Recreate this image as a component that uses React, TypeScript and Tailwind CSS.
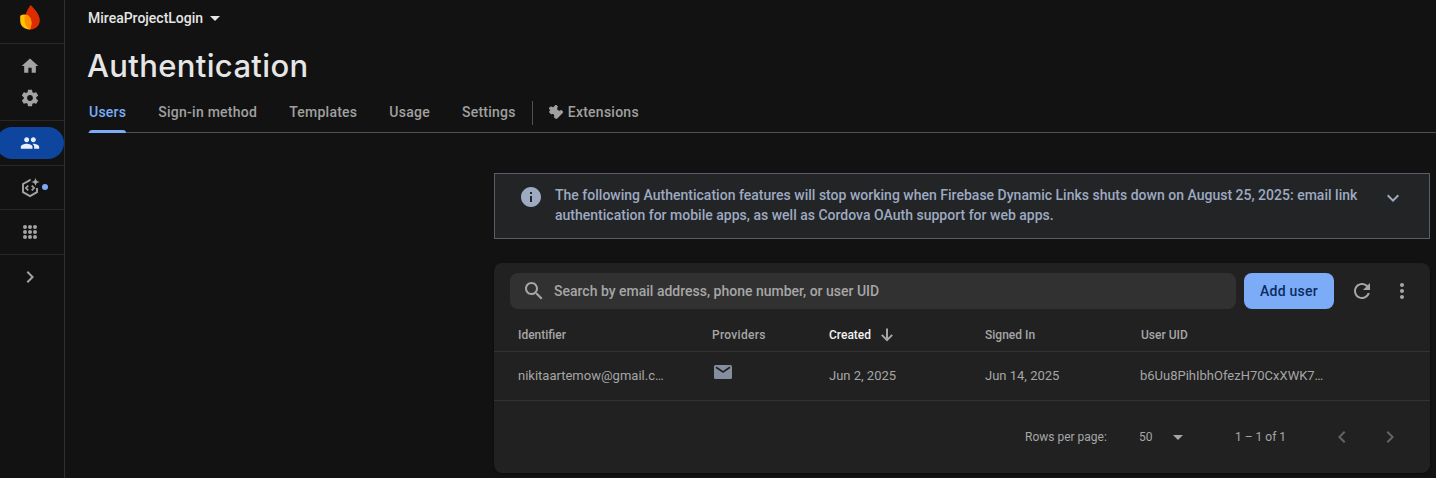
import type { ReactNode } from 'react';

type IconProps = { d: string; size?: number; className?: string };

function Icon({ d, size = 20, className = '' }: IconProps) {
  return (
    <svg width={size} height={size} viewBox="0 0 24 24" fill="currentColor" className={`shrink-0 ${className}`} aria-hidden="true">
      <path d={d} />
    </svg>
  );
}

const paths = {
  home: 'M10 20v-6h4v6h5v-8h3L12 3 2 12h3v8z',
  settings:
    'M19.43 12.98c.04-.32.07-.64.07-.98s-.03-.66-.07-.98l2.11-1.65c.19-.15.24-.42.12-.64l-2-3.46c-.12-.22-.39-.3-.61-.22l-2.49 1c-.52-.4-1.08-.73-1.69-.98l-.38-2.65C14.46 2.18 14.25 2 14 2h-4c-.25 0-.46.18-.49.42l-.38 2.65c-.61.25-1.17.59-1.69.98l-2.49-1c-.23-.09-.49 0-.61.22l-2 3.46c-.13.22-.07.49.12.64l2.11 1.65c-.04.32-.07.65-.07.98s.03.66.07.98l-2.11 1.65c-.19.15-.24.42-.12.64l2 3.46c.12.22.39.3.61.22l2.49-1c.52.4 1.08.73 1.69.98l.38 2.65c.03.24.24.42.49.42h4c.25 0 .46-.18.49-.42l.38-2.65c.61-.25 1.17-.59 1.69-.98l2.49 1c.23.09.49 0 .61-.22l2-3.46c.12-.22.07-.49-.12-.64l-2.11-1.65zM12 15.5c-1.93 0-3.5-1.57-3.5-3.5s1.57-3.5 3.5-3.5 3.5 1.57 3.5 3.5-1.57 3.5-3.5 3.5z',
  people:
    'M16 11c1.66 0 2.99-1.34 2.99-3S17.66 5 16 5c-1.66 0-3 1.34-3 3s1.34 3 3 3zm-8 0c1.66 0 2.99-1.34 2.99-3S9.66 5 8 5C6.34 5 5 6.34 5 8s1.34 3 3 3zm0 2c-2.33 0-7 1.17-7 3.5V19h14v-2.5c0-2.33-4.67-3.5-7-3.5zm8 0c-.29 0-.62.02-.97.05 1.16.84 1.97 1.97 1.97 3.45V19h6v-2.5c0-2.33-4.67-3.5-7-3.5z',
  right: 'M10 6 8.59 7.41 13.17 12l-4.58 4.59L10 18l6-6z',
  left: 'M15.41 7.41 14 6l-6 6 6 6 1.41-1.41L10.83 12z',
  down: 'M16.59 8.59 12 13.17 7.41 8.59 6 10l6 6 6-6z',
  dropDown: 'M7 10l5 5 5-5z',
  info: 'M12 2C6.48 2 2 6.48 2 12s4.48 10 10 10 10-4.48 10-10S17.52 2 12 2zm1 15h-2v-6h2v6zm0-8h-2V7h2v2z',
  search:
    'M15.5 14h-.79l-.28-.27C15.41 12.59 16 11.11 16 9.5 16 5.91 13.09 3 9.5 3S3 5.91 3 9.5 5.91 16 9.5 16c1.61 0 3.09-.59 4.23-1.57l.27.28v.79l5 4.99L20.49 19l-4.99-5zm-6 0C7.01 14 5 11.99 5 9.5S7.01 5 9.5 5 14 7.01 14 9.5 11.99 14 9.5 14z',
  refresh:
    'M17.65 6.35C16.2 4.9 14.21 4 12 4c-4.42 0-7.99 3.58-7.99 8s3.57 8 7.99 8c3.73 0 6.84-2.55 7.73-6h-2.08c-.82 2.33-3.04 4-5.65 4-3.31 0-6-2.69-6-6s2.69-6 6-6c1.66 0 3.14.69 4.22 1.78L13 11h7V4l-2.35 2.35z',
  more: 'M12 8c1.1 0 2-.9 2-2s-.9-2-2-2-2 .9-2 2 .9 2 2 2zm0 2c-1.1 0-2 .9-2 2s.9 2 2 2 2-.9 2-2-.9-2-2-2zm0 6c-1.1 0-2 .9-2 2s.9 2 2 2 2-.9 2-2-.9-2-2-2z',
};

function FirebaseLogo() {
  return (
    <svg width="20" height="25" viewBox="0 0 20 25" aria-hidden="true">
      <path d="M10.500 0C14 3.100 19.800 9.500 19.800 15.200c0 5.500-4.200 9.300-9.500 9.300-4 0-6-4.300-5.800-9C4.700 9.500 7.600 4.500 10.500 0z" fill="#dd2c00" />
      <path d="M.2 10.800C3 8.900 7.500 9.200 9.600 12c2.200 3 2.300 8 .3 12.500C4.200 24.500.2 21 .2 15.500z" fill="#ffc400" />
      <path d="M4.900 9.800c2 .2 3.600 1 4.800 2.400 2.400 3 2.400 8 .2 12.300-4-2-6.500-7.500-5-14.700z" fill="#ff9100" />
    </svg>
  );
}

function CodeSparkle() {
  return (
    <svg width="22" height="22" viewBox="0 0 22 22" fill="none" stroke="currentColor" strokeWidth="1.9" aria-hidden="true">
      <path d="M11.600 3.400 11 3.100 4 7v8.100l7 4 7-4v-4" />
      <path d="M9.300 8.600 6.900 11l2.400 2.400M12.700 8.600 15.100 11l-2.400 2.400" strokeWidth="1.700" />
      <path d="M16.500.6c.5 3 1.400 3.900 4.400 4.400-3 .5-3.900 1.400-4.400 4.400-.5-3-1.400-3.900-4.400-4.400 3-.5 3.900-1.400 4.400-4.400z" fill="currentColor" stroke="none" />
    </svg>
  );
}

function AppsGrid() {
  return (
    <svg width="20" height="20" viewBox="0 0 20 20" fill="currentColor" aria-hidden="true">
      {[5, 10, 15].map((y) => [5, 10, 15].map((x) => <circle key={`${x}-${y}`} cx={x} cy={y} r="2" />))}
    </svg>
  );
}

function ExtensionIcon() {
  return (
    <svg width="16" height="16" viewBox="0 0 16 16" fill="currentColor" className="shrink-0" aria-hidden="true">
      <path d="M1.500 3.200C2.300 2.200 3.700 2.100 4.600 3L5 3.400 6.900 1.500c.6-.6 1.400-.6 2 0l1.200 1.200c-1.100 1-1.200 2.500-.3 3.400.9.900 2.400.8 3.400-.3l1.500 1.500c.5.500.5 1.200 0 1.700l-5.400 5.400c-.6.600-1.500.6-2.100 0L5.800 13c.7-1 .6-1.900 0-2.500s-1.500-.7-2.500 0L1.500 8.700c-.5-.5-.5-1.200 0-1.700l.8-.9-.5-.4C.9 5 .8 4 1.500 3.200z" />
    </svg>
  );
}

function MailIcon() {
  return (
    <svg width="18" height="14" viewBox="0 0 18 14" aria-hidden="true">
      <rect width="18" height="14" rx="1.600" fill="#858e9e" />
      <path d="M2 2.300 9 6.900l7-4.600" fill="none" stroke="#212121" strokeWidth="1.700" />
    </svg>
  );
}

function SortArrow() {
  return (
    <svg width="12" height="14" viewBox="0 0 12 14" fill="none" stroke="#a6a6a6" strokeWidth="2" aria-hidden="true">
      <path d="M6 .5v11.500M.8 6.900 6 12.100l5.200-5.200" />
    </svg>
  );
}

function RailItem({ children, className = '' }: { children: ReactNode; className?: string }) {
  return <div className={`flex h-8 w-[60px] items-center justify-center ${className}`}>{children}</div>;
}

function Sidebar() {
  return (
    <nav className="flex w-[65px] shrink-0 flex-col overflow-hidden border-r border-[#303030] text-[#a3a3a3]">
      <div className="flex h-11 w-full border-b border-[#272727] pt-[5px]">
        <div className="flex w-[60px] justify-center">
          <FirebaseLogo />
        </div>
      </div>
      <div className="flex h-[77px] flex-col border-b border-[#272727] pt-1.5">
        <RailItem><Icon d={paths.home} /></RailItem>
        <RailItem><Icon d={paths.settings} /></RailItem>
      </div>
      <div className="h-[45px] border-b border-[#272727] pt-1.5">
        <div className="-ml-1 flex h-8 w-[68px] items-center justify-center rounded-full bg-[#0d459f] text-[#e8effc]">
          <Icon d={paths.people} />
        </div>
      </div>
      <div className="relative flex h-11 items-center border-b border-[#272727]">
        <RailItem><CodeSparkle /></RailItem>
        <span className="absolute left-[42px] top-[18px] size-1.5 rounded-full bg-[#7cacf8]" />
      </div>
      <div className="flex h-[45px] items-center border-b border-[#272727]">
        <RailItem><AppsGrid /></RailItem>
      </div>
      <div className="flex h-11 items-center">
        <RailItem><Icon d={paths.right} size={24} /></RailItem>
      </div>
    </nav>
  );
}

function Tabs() {
  return (
    <div className="ml-[23px] flex h-[41px] border-b border-[#4d5057] pl-px text-sm font-medium leading-10 tracking-[0.25px] text-[#a0a0a0]">
      <div className="flex h-[41px] gap-8">
        <div className="relative text-[#7cacf8]">
          Users
          <span className="absolute inset-x-0 bottom-0 h-[3px] rounded-t-[3px] bg-[#7cacf8]" />
        </div>
        <div>Sign-in method</div>
        <div>Templates</div>
        <div>Usage</div>
        <div>Settings</div>
      </div>
      <div className="ml-4 mt-[9px] h-6 w-px bg-[#4d5057]" />
      <div className="ml-[15px] flex items-center gap-1">
        <ExtensionIcon />
        <span>Extensions</span>
      </div>
    </div>
  );
}

function Banner() {
  return (
    <div className="flex h-[66px] border border-[#5a5d66] bg-[#222426] pl-6 pr-6 pt-[11px] text-[#9eaac1]">
      <Icon d={paths.info} size={24} />
      <p className="ml-3 w-[826px] text-sm font-medium leading-5 tracking-[0.008px]">
        The following Authentication features will stop working when Firebase Dynamic Links shuts down on August 25, 2025: email link
        <br />
        authentication for mobile apps, as well as Cordova OAuth support for web apps.
      </p>
      <Icon d={paths.down} size={24} className="mt-px" />
    </div>
  );
}

const columns = 'grid grid-cols-[194px_117px_156px_155px_1fr] items-center border-b border-[#323232] pl-6';

function UsersCard() {
  return (
    <section className="mt-6 h-[210px] rounded-lg bg-[#212121] text-[#a6a6a6] shadow-[0_1px_3px_rgba(0,0,0,0.5)]">
      <div className="flex items-center pl-4 pt-2.5">
        <div className="flex h-9 w-[726px] items-center gap-2 rounded-lg bg-[#313131] pl-3">
          <Icon d={paths.search} size={24} />
          <span className="text-sm font-medium">Search by email address, phone number, or user UID</span>
        </div>
        <button className="ml-2 h-9 w-[90px] rounded-lg bg-[#7cacf8] text-sm font-medium tracking-[0.25px] text-[#0b2b61]">Add user</button>
        <Icon d={paths.refresh} size={24} className="ml-4" />
        <Icon d={paths.more} size={24} className="ml-4" />
      </div>
      <div className={`${columns} mt-2.5 h-[33px] text-xs font-medium`}>
        <span>Identifier</span>
        <span className="tracking-[0.3px]">Providers</span>
        <span className="flex items-center gap-2.5 text-[#f2f2f2]">
          Created
          <SortArrow />
        </span>
        <span>Signed In</span>
        <span className="pl-px">User UID</span>
      </div>
      <div className={`${columns} h-[49px] text-[13px]`}>
        <span>nikitaartemow@gmail.c…</span>
        <span className="-mt-2 pl-0.5"><MailIcon /></span>
        <span>Jun 2, 2025</span>
        <span>Jun 14, 2025</span>
        <span>b6Uu8PihIbhOfezH70CxXWK7…</span>
      </div>
      <div className="flex h-[72px] items-center justify-end pr-7 text-xs">
        <span className="w-[114px]">Rows per page:</span>
        <span className="w-[31px]">50</span>
        <Icon d={paths.dropDown} size={24} className="-ml-1" />
        <span className="ml-[45px] w-[95px]">1 – 1 of 1</span>
        <Icon d={paths.left} size={24} className="text-[#646464]" />
        <Icon d={paths.right} size={24} className="ml-6 text-[#646464]" />
      </div>
    </section>
  );
}

export default function App() {
  return (
    <div className="flex h-[478px] w-[1436px] overflow-hidden bg-[#121212] font-['Roboto',sans-serif] antialiased">
      <Sidebar />
      <main className="flex min-w-0 flex-1 flex-col">
        <div className="flex h-9 items-center pl-[23px] text-sm font-medium text-[#e6e6e6]">
          <span>MireaProjectLogin</span>
          <Icon d={paths.dropDown} size={24} />
        </div>
        <h1 className="h-14 pl-[22px] font-['Inter',sans-serif] text-[31px] font-medium leading-[60px] tracking-[0.35px] text-[#e6e6e6]">Authentication</h1>
        <Tabs />
        <div className="ml-[429px] mt-10 w-[936px]">
          <Banner />
          <UsersCard />
        </div>
      </main>
    </div>
  );
}
